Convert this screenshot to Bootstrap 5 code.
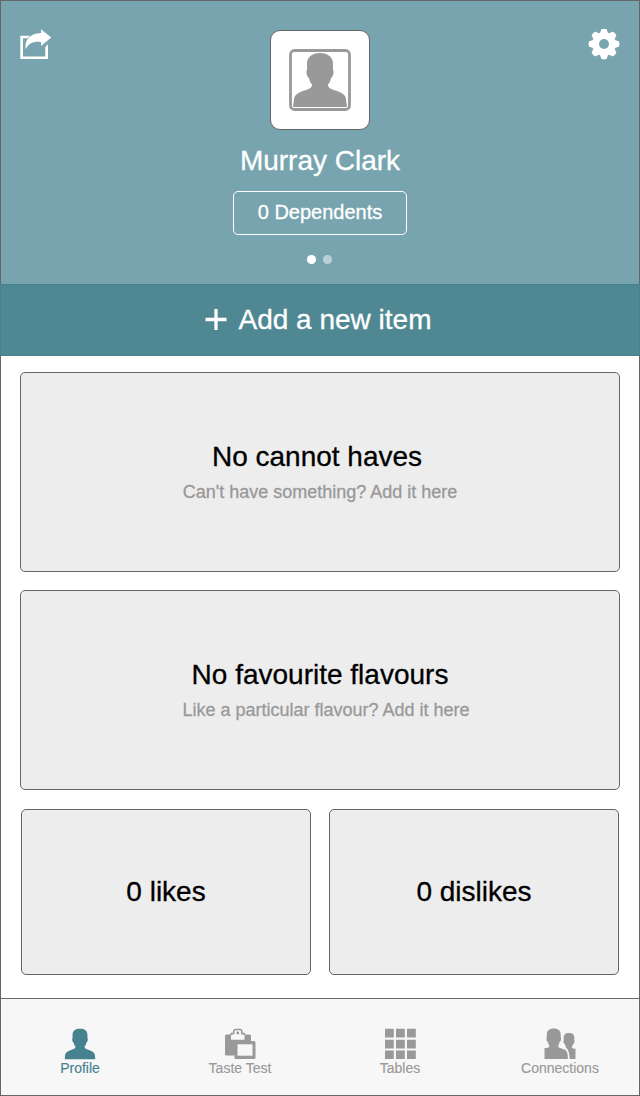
<!DOCTYPE html>
<html lang="en">
<head>
<meta charset="utf-8">
<meta name="viewport" content="width=device-width, initial-scale=1">
<title>Profile</title>
<link href="https://cdn.jsdelivr.net/npm/bootstrap@5.3.0/dist/css/bootstrap.min.css" rel="stylesheet">
<style>
  body { font-family: "Liberation Sans", Arial, sans-serif; color: #000; background: #fff; -webkit-text-stroke: .3px currentColor; }
  svg { display: block; }
  .app-frame { width: 640px; height: 1096px; border: 1px solid #666; }
  .profile-head { height: 283px; background: #77a4ae; padding: 28px 19px 0 19px; }
  .avatar-box { width: 100px; height: 100px; border: 1px solid #666; border-radius: 10px; background: #fff; margin-top: 1px; }
  .title-text { font-size: 28px; line-height: 32px; font-weight: 400; }
  .user-name { margin-top: 15px; }
  .dependents { width: 174px; height: 44px; margin-top: 14px; padding: 0 0 2px; font-size: 20px; line-height: 40px; border: 1px solid #fff; border-radius: 5px; color: #fff; }
  .pager { gap: 7.5px; margin: 20px 1px 0 0; }
  .pager span { width: 8.5px; height: 8.5px; border-radius: 50%; background: #fff; }
  .pager span + span { background: #b9d0d6; }
  .add-bar { height: 72px; margin: 0 -1px; background: #4f8893; border: 1px solid #468290; border-radius: 0; color: #fff; gap: 12px; padding: 0 4px 0 0; }
  .add-bar svg { margin-bottom: 1px; }
  .tile { background: #ededed; border: 1px solid #666; border-radius: 5px; }
  .tile-lg { height: 200px; }
  .tile-sm { width: 290px; height: 166px; }
  .tiles-row { padding: 0 1px; margin-top: 1px; }
  .content-area { padding: 16px 19px 0; gap: 18px; }
  .hint { font-size: 18px; line-height: 22px; color: #999; margin-top: 8px; padding-bottom: 1px; }
  .flavour-hint { padding-left: 12px; }
  .cannot-title { padding-right: 6px; }
  .tab-bar { height: 97px; border-top: 1px solid #666; background: #f7f7f7; }
  .tab-bar .nav { margin: 0 -1px; }
  .tab-bar .nav-link { padding: 29px 0 0; color: #999; font-size: 14px; line-height: 16px; -webkit-text-stroke-width: .15px; }
  .tab-bar .nav-link.active { color: #468290; }
</style>
</head>
<body>
<svg width="0" height="0" class="position-absolute">
  <symbol id="bust" viewBox="0 0 54 54"><path d="M27 0C19 0 14 4 14 11V17C12.500 17.500 14 24.500 16 25C16.500 28 17.500 30 19 31.500C19 36.500 14 36 6.500 39.500Q1.500 41.500 1 46L0 54H54L53 46Q52.500 41.500 47.500 39.500C40 36 35 36.500 35 31.500C36.500 30 37.500 28 38 25C40 24.500 41.500 17.500 40 17V11C40 4 35 0 27 0Z"/></symbol>
</svg>
<div class="app-frame d-flex flex-column mx-auto">
  <header class="profile-head d-flex justify-content-between align-items-start text-white">
    <a href="#" class="text-white" aria-label="Share">
      <svg width="32" height="31" viewBox="0 0 32 31" fill="currentColor"><path d="M10 6.800L7.500 9.300H3V27.400H25.300V18L28 15.300V30H.3V6.800Z"/><path d="M21 .2L31.300 8.600L21 17V13C14 12 8.500 14 5.800 20.300C4 12 9 4.500 21 4Z"/></svg>
    </a>
    <div class="d-flex flex-column align-items-center">
      <div class="avatar-box d-flex align-items-center justify-content-center">
        <svg width="62" height="62" viewBox="0 0 62 62" fill="#999"><rect x="1.500" y="1.500" width="59" height="59" rx="4" fill="none" stroke="#999" stroke-width="2.800"/><use href="#bust" x="4" y="4" width="54" height="54"/></svg>
      </div>
      <div class="title-text user-name">Murray Clark</div>
      <button class="btn dependents">0 Dependents</button>
      <div class="pager d-flex"><span></span><span></span></div>
    </div>
    <a href="#" class="text-white" aria-label="Settings">
      <svg width="32" height="32" viewBox="0 0 32 32"><g fill="#fff"><circle cx="16" cy="15" r="11.800"/><path id="tooth" d="M11.500 5L13.300 .5Q13.500 -.3 14.300 -.3H17.700Q18.500 -.3 18.700 .5L20.500 5V25L18.700 29.500Q18.500 30.300 17.700 30.300H14.300Q13.500 30.300 13.300 29.500L11.500 25Z"/><use href="#tooth" transform="rotate(45 16 15)"/><use href="#tooth" transform="rotate(90 16 15)"/><use href="#tooth" transform="rotate(135 16 15)"/></g><circle cx="16" cy="15" r="5" fill="#77a4ae"/></svg>
    </a>
  </header>
  <button class="btn add-bar title-text d-flex align-items-center justify-content-center flex-shrink-0">
    <svg width="22" height="22" viewBox="0 0 22 22" fill="none" stroke="currentColor" stroke-width="3.300"><path d="M11 0V21M.5 10.500H21.500"/></svg>
    <span>Add a new item</span>
  </button>
  <main class="content-area d-flex flex-column flex-grow-1">
    <section class="tile tile-lg d-flex flex-column align-items-center justify-content-center">
      <h2 class="title-text cannot-title m-0">No cannot haves</h2>
      <p class="hint mb-0">Can't have something? Add it here</p>
    </section>
    <section class="tile tile-lg d-flex flex-column align-items-center justify-content-center">
      <h2 class="title-text m-0">No favourite flavours</h2>
      <p class="hint flavour-hint mb-0">Like a particular flavour? Add it here</p>
    </section>
    <div class="d-flex justify-content-between tiles-row">
      <section class="tile tile-sm d-flex align-items-center justify-content-center"><h2 class="title-text m-0">0 likes</h2></section>
      <section class="tile tile-sm d-flex align-items-center justify-content-center"><h2 class="title-text m-0">0 dislikes</h2></section>
    </div>
  </main>
  <footer class="tab-bar flex-shrink-0">
  <nav class="nav nav-justified flex-nowrap">
    <a class="nav-link active d-flex flex-column align-items-center" href="#">
      <svg width="32" height="32" viewBox="0 0 32 32" fill="currentColor"><use href="#bust" x=".5" y=".5" width="31" height="31"/></svg>Profile</a>
    <a class="nav-link d-flex flex-column align-items-center" href="#">
      <svg width="32" height="32" viewBox="0 0 32 32" fill="currentColor"><rect x="1" y="6.500" width="26" height="21" rx="1.500"/><path d="M7 11.800V6.500H9.500V3.500Q9.500 1.500 11.500 1.500H16Q18 1.500 18 3.500V6.500H20.500V11.800Z" fill="#f7f7f7"/><path d="M7.300 7V5.500H9.700V3.500Q9.700 1.400 11.500 1.400H16Q17.800 1.400 17.800 3.500V5.500H20.200V7" fill="none" stroke="currentColor" stroke-width="1.500"/><circle cx="13.800" cy="5" r="1.400"/><rect x="10.500" y="13" width="21" height="18" rx="1.500"/><rect x="13.500" y="16.300" width="15" height="11.400" fill="#f7f7f7"/></svg>Taste Test</a>
    <a class="nav-link d-flex flex-column align-items-center" href="#">
      <svg width="32" height="32" viewBox="0 0 32 32" fill="currentColor"><path d="M1 .8h8.800v8.800h-8.800zM12 .8h8.800v8.800h-8.800zM23 .8h8.800v8.800h-8.800zM1 11.800h8.800v8.800h-8.800zM12 11.800h8.800v8.800h-8.800zM23 11.800h8.800v8.800h-8.800zM1 22.500h8.800v8.500h-8.800zM12 22.500h8.800v8.500h-8.800zM23 22.500h8.800v8.500h-8.800z"/></svg>Tables</a>
    <a class="nav-link d-flex flex-column align-items-center" href="#">
      <svg width="32" height="32" viewBox="0 0 32 32" fill="currentColor"><path d="M9.700.500C5 .5 2.800 3 2.800 6.500V9.500C2 10 2.500 13.500 4 14Q4.300 16.500 5.300 17.500V18.500Q5 20 .5 20.200V31H23.800C23.800 27 23.500 24 22 22.500C20 20.500 14.500 20.500 14.300 18.500V17.500Q15.300 16.500 15.500 14C17 13.500 17.500 10 16.700 9.500V6.500C16.700 3 14.500 .5 9.700.5Z"/><path d="M25 5C21 5 19.700 7 19.700 9.500V12.500C19 13 19.500 15.500 20.800 16Q21.200 18 22 18.500V19.500Q25.500 22.500 25.600 31H31.500V20.700Q28.300 20.700 27.800 19.500V18.500Q28.800 18 29.200 16C30.500 15.500 31 13 30.300 12.500V9.500C30.300 7 29 5 25 5Z"/></svg>Connections</a>
  </nav>
  </footer>
</div>
<script src="https://cdn.jsdelivr.net/npm/bootstrap@5.3.0/dist/js/bootstrap.bundle.min.js"></script>
</body>
</html>
